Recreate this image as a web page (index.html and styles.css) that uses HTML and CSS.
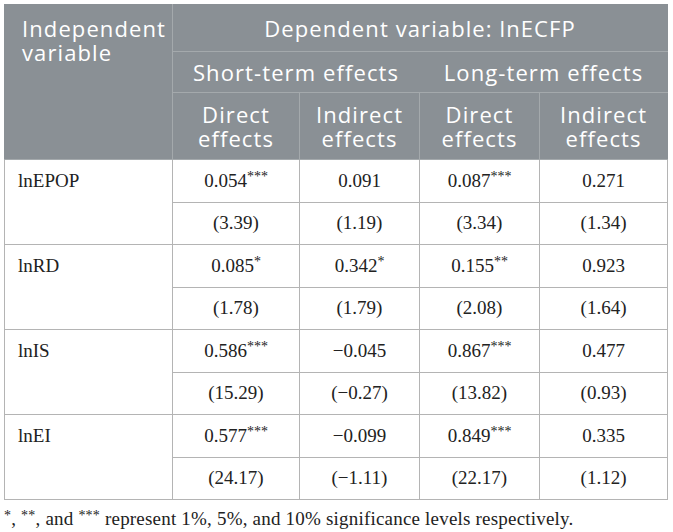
FILE: index.html
```html
<!DOCTYPE html>
<html>
<head>
<meta charset="utf-8">
<link rel="stylesheet" href="styles.css">
</head>
<body>
<table class="tbl">
  <colgroup>
    <col class="c1"><col class="c2"><col class="c3"><col class="c4"><col class="c5">
  </colgroup>
  <thead>
    <tr class="h1">
      <th rowspan="3" class="indep">Independent variable</th>
      <th colspan="4">Dependent variable: lnECFP</th>
    </tr>
    <tr class="h2">
      <th colspan="2" class="nodiv">Short-term effects</th>
      <th colspan="2">Long-term effects</th>
    </tr>
    <tr class="h3">
      <th>Direct<br>effects</th>
      <th>Indirect<br>effects</th>
      <th>Direct<br>effects</th>
      <th>Indirect<br>effects</th>
    </tr>
  </thead>
  <tbody>
    <tr><td rowspan="2" class="lab">lnEPOP</td><td>0.054<sup>***</sup></td><td>0.091</td><td>0.087<sup>***</sup></td><td>0.271</td></tr>
    <tr><td>(3.39)</td><td>(1.19)</td><td>(3.34)</td><td>(1.34)</td></tr>
    <tr><td rowspan="2" class="lab">lnRD</td><td>0.085<sup>*</sup></td><td>0.342<sup>*</sup></td><td>0.155<sup>**</sup></td><td>0.923</td></tr>
    <tr><td>(1.78)</td><td>(1.79)</td><td>(2.08)</td><td>(1.64)</td></tr>
    <tr><td rowspan="2" class="lab">lnIS</td><td>0.586<sup>***</sup></td><td>−0.045</td><td>0.867<sup>***</sup></td><td>0.477</td></tr>
    <tr><td>(15.29)</td><td>(−0.27)</td><td>(13.82)</td><td>(0.93)</td></tr>
    <tr><td rowspan="2" class="lab">lnEI</td><td>0.577<sup>***</sup></td><td>−0.099</td><td>0.849<sup>***</sup></td><td>0.335</td></tr>
    <tr><td>(24.17)</td><td>(−1.11)</td><td>(22.17)</td><td>(1.12)</td></tr>
  </tbody>
</table>
<p class="note"><sup>*</sup>, <sup>**</sup>, and <sup>***</sup> represent 1%, 5%, and 10% significance levels respectively.</p>
</body>
</html>
```

FILE: styles.css
```css
html, body {
  margin: 0;
  padding: 0;
  background: #ffffff;
}
body {
  padding: 4px 0 0 4px;
}
.tbl {
  border-collapse: collapse;
  table-layout: fixed;
  width: 663px;
  font-family: "Liberation Serif", "Times New Roman", serif;
}
.c1 { width: 168px; }
.c2 { width: 127px; }
.c3 { width: 120px; }
.c4 { width: 120px; }
.c5 { width: 128px; }

.tbl th {
  background: #8a9095;
  color: #ffffff;
  font-family: "Open Sans", "Noto Sans", sans-serif;
  font-weight: 400;
  font-size: 22px;
  letter-spacing: 1.1px;
  line-height: 24px;
  border: 1px solid #a4a9ac;
  padding: 0 2px;
  text-align: center;
  vertical-align: middle;
}
.tbl thead tr:first-child th { border-top-color: #8a9095; }
.tbl th:first-child { border-left-color: #8a9095; }
.tbl .h1 th:last-child, .tbl .h2 th:last-child, .tbl .h3 th:last-child { border-right-color: #8a9095; }
.tbl th.nodiv { border-right-color: #8a9095; }
.tbl .h1 { height: 47px; }
.tbl .h2 { height: 41px; }
.tbl .h3 { height: 67px; }
.tbl th.indep {
  text-align: left;
  vertical-align: top;
  padding: 11px 4px 0 17px;
}

.tbl td {
  border: 1px solid #b4b4b4;
  height: 41.5px;
  padding: 0 4px;
  text-align: center;
  vertical-align: middle;
  font-size: 19px;
  color: #222222;
}
.tbl td.lab {
  text-align: left;
  vertical-align: top;
  padding: 10px 10px 0 13px;
}
.tbl sup {
  font-size: 14px;
  vertical-align: 6px;
  line-height: 0;
}
.note {
  margin: 8px 0 0 0;
  font-family: "Liberation Serif", "Times New Roman", serif;
  font-size: 19px;
  letter-spacing: 0.2px;
  color: #222222;
}
.note sup {
  font-size: 14px;
  vertical-align: 5px;
  line-height: 0;
}
```
